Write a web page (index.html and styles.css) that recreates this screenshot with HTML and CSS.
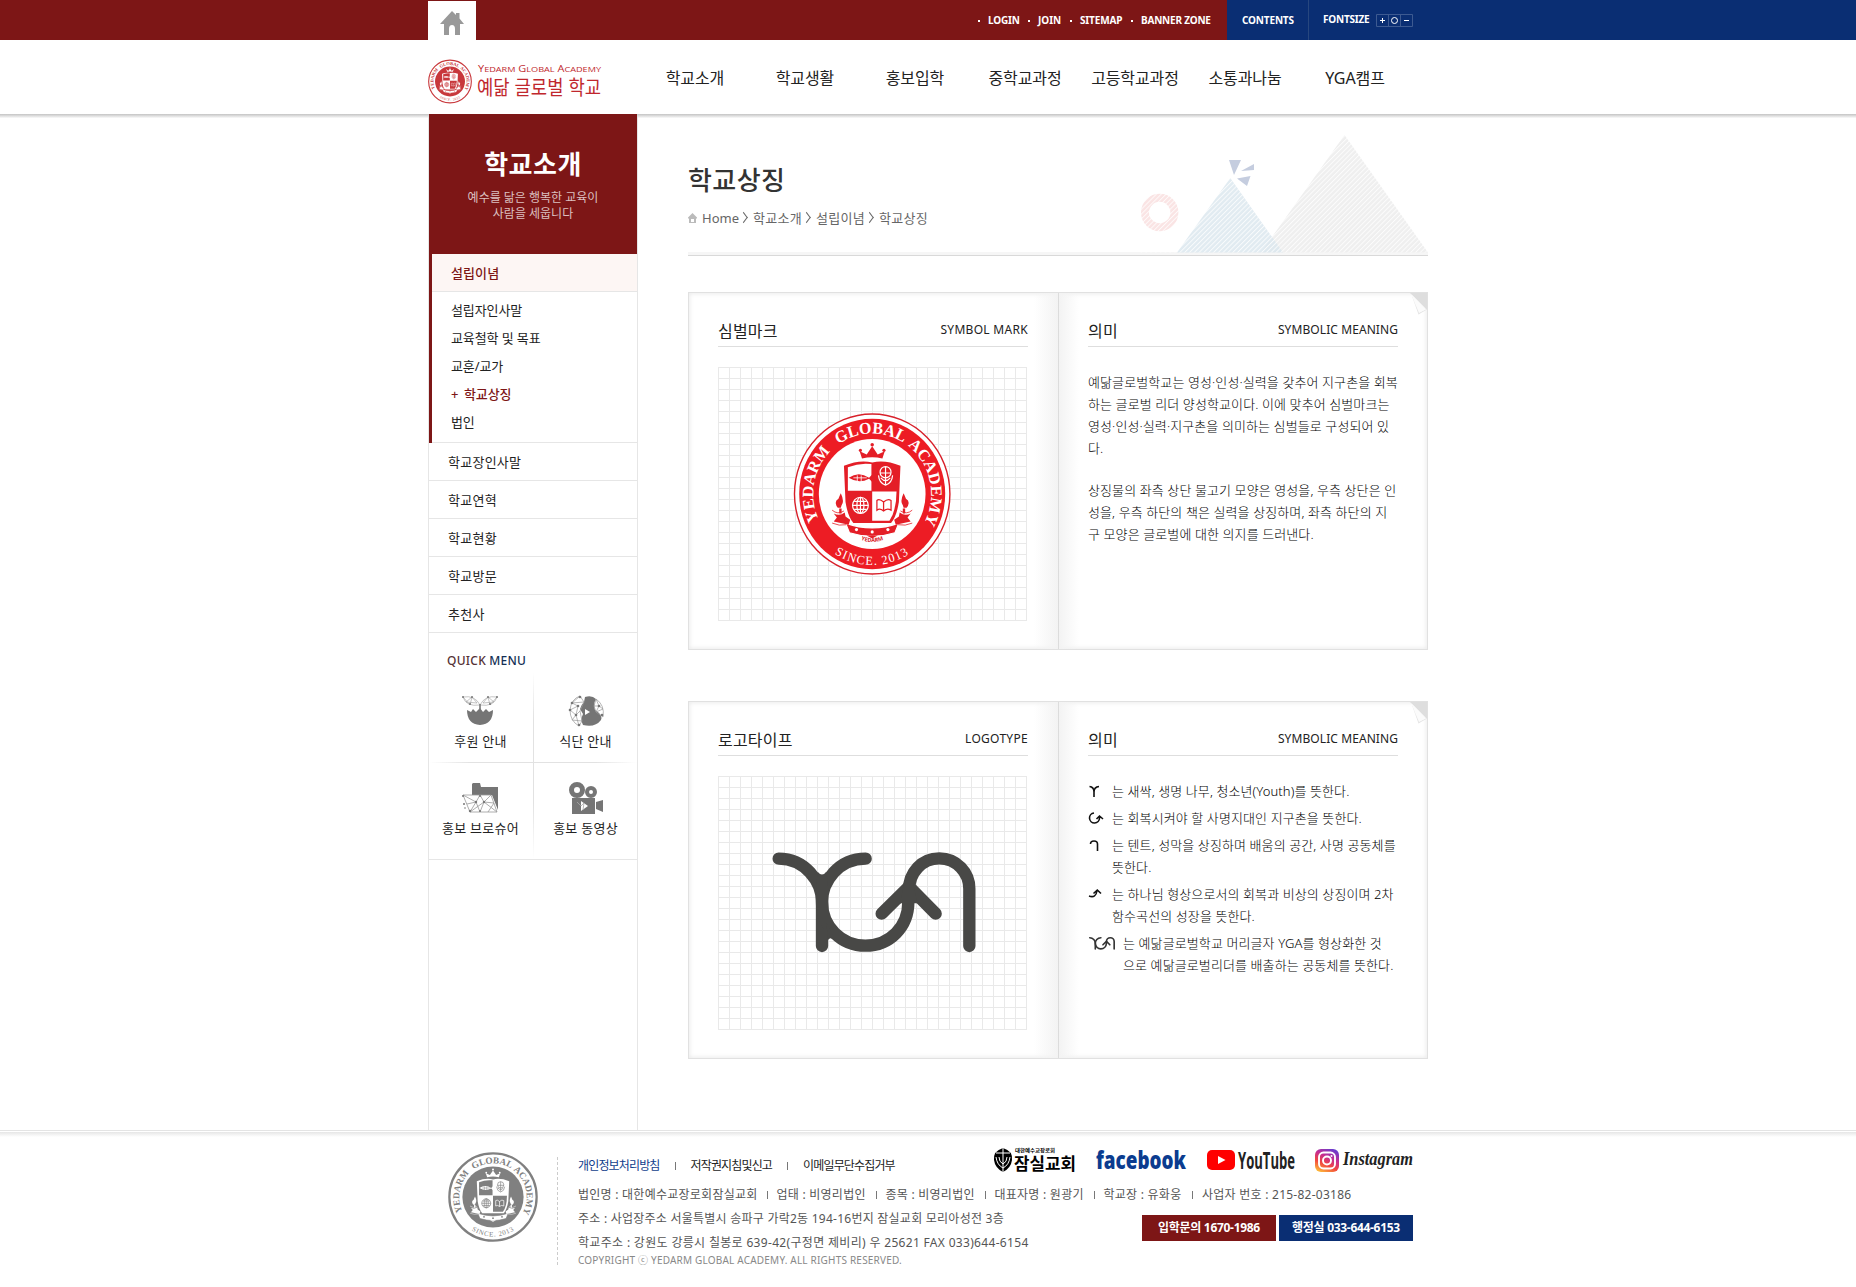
FILE: index.html
```html
<!DOCTYPE html>
<html lang="ko">
<head>
<meta charset="utf-8">
<title>학교상징 - 예닮글로벌학교</title>
<link rel="stylesheet" href="styles.css">
</head>
<body>
<svg class="defs" width="0" height="0" aria-hidden="true">
  <defs>
    <path id="arc-top" d="M-65 37.5 A75 75 0 1 1 65 37.5"/>
    <path id="arc-bottom" d="M-76.2 44 A88 88 0 0 0 76.2 44"/>
    <path id="arc-name" d="M-16 56 Q0 63 16 56"/>
    <g id="seal-text" class="seal-text">
      <g font-size="20.500" font-weight="700">
        <text><textPath href="#arc-top" startOffset="6">YEDARM</textPath></text>
        <text><textPath href="#arc-top" startOffset="111">GLOBAL</textPath></text>
        <text><textPath href="#arc-top" startOffset="205">ACADEMY</textPath></text>
      </g>
      <text font-size="15.5" letter-spacing="1.6" text-anchor="middle"><textPath href="#arc-bottom" startOffset="50%">SINCE. 2013</textPath></text>
    </g>
    <g id="seal-emblem">
      <path fill="var(--ink)" d="M-13 -44 L-16 -53 L-7 -49 L0 -59 L7 -49 L16 -53 L13 -44 Q0 -47 -13 -44Z"/>
      <g fill="var(--ink)"><circle cx="-15" cy="-54" r="2"/><circle cx="0" cy="-61" r="2.2"/><circle cx="15" cy="-54" r="2"/></g>
      <path fill="var(--ink)" d="M-36 -35 Q-16 -43 0 -39 Q16 -43 36 -35 L34 10 Q31 28 24 36 L-24 36 Q-31 28 -34 10Z"/>
      <path fill="var(--paper)" d="M-31 -33 Q-16 -39 -1 -37 L-1 -4 L-31 -4Z"/>
      <path fill="var(--paper)" d="M0 -3 L31 -3 Q31 20 22 33 L0 33Z"/>
      <path fill="var(--ink)" d="M-30 -20 Q-17 -29 -4 -20 L0 -24 L0 -15 L-4 -19 Q-17 -12 -30 -20Z"/>
      <path stroke="var(--paper)" fill="none" d="M-24 -20 H-7 M-19 -23 V-16 M-14 -23 V-16"/>
      <path fill="none" stroke="var(--paper)" stroke-width="1.5" d="M17 -34 V-12 M10 -26 H24 M17 -34 A7 7 0 0 1 24 -27 A7 7 0 0 1 10 -27 A7 7 0 0 1 17 -34 M8 -23 Q9 -13 17 -11 Q25 -13 26 -23 M11 -20 Q17 -13 23 -20"/>
      <g fill="none" stroke="var(--paper)" stroke-width="1.5"><circle cx="-15" cy="14" r="10"/><ellipse cx="-15" cy="14" rx="4.5" ry="10"/><path d="M-25 14 H-5 M-15 4 V24 M-23 9 H-7 M-23 19 H-7"/></g>
      <path fill="none" stroke="var(--ink)" stroke-width="1.6" d="M14.500 10 Q9 5 6 8 V20 Q10 17 14.500 21 Q19 17 24 20 V8 Q20 5 14.500 10 V21"/>
      <path fill="var(--ink)" stroke="var(--paper)" stroke-width="1.500" d="M-34 36 Q0 48 34 36 L29 48 Q0 57 -29 48Z"/>
      <g fill="var(--paper)"><circle cx="-20" cy="44" r="2"/><circle cx="0" cy="47" r="2"/><circle cx="20" cy="44" r="2"/></g>
      <g id="seal-torch"><path fill="var(--ink)" d="M-43 18 Q-50 10 -43 6 Q-42 3 -40 -1 Q-35 9 -39 14 L-40 17 H-44Z M-42 18 H-39 V24 H-42Z M-49 24 Q-42 28 -35 23 L-34 28 L-28 32 L-30 38 L-49 34 L-45 29Z"/><path fill="none" stroke="var(--ink)" d="M-51 20 Q-44 26 -36 21 M-51 36 Q-42 40 -33 38"/></g>
      <use href="#seal-torch" transform="scale(-1 1)"/>
      <path fill="var(--ink)" d="M-7 51.500 H7 L0 55Z"/>
    </g>
    <g id="seal-small">
      <circle r="97" fill="#fff" stroke="var(--ring)" stroke-width="5"/>
      <circle r="68" fill="var(--ring)"/>
      <use href="#seal-text"/>
      <use href="#seal-emblem"/>
    </g>
    <g id="yga-mark" fill="none" stroke="currentColor" stroke-linecap="round" stroke-linejoin="round">
      <path d="M296 506 C375 506 426 575 426 636 V768"/>
      <path d="M557 506 C475 506 426 575 426 636 C426 710 484 767 556 767 C630 767 685 710 685 636 L687 600 C687 548 725 505 778 505 C830 505 868 548 868 596 V768"/>
      <path d="M605 671 L687 590 L767 671"/>
    </g>
    <pattern id="hatch" width="3.400" height="3.400" patternUnits="userSpaceOnUse" patternTransform="rotate(45)"><path d="M0.500 0 V3.400" stroke="#fff" stroke-width=".9"/></pattern>
  </defs>
</svg>

<div class="topbar">
  <div class="wrap topbar-inner">
    <a class="home"><svg width="24" height="24" viewBox="0 0 24 24"><path fill="#999" d="M12 0 L16 4 V2 H19.500 V7.500 L24 13 H20 V24 H15 V18 Q15 14 12 14 Q9 14 9 18 V24 H4 V13 H0Z"/></svg></a>
    <ul class="util">
      <li class="u-login">LOGIN</li><li class="u-join">JOIN</li><li class="u-map">SITEMAP</li><li class="u-banner">BANNER ZONE</li>
    </ul>
    <a class="contents">CONTENTS</a>
    <div class="fontsize"><span>FONTSIZE</span>
      <svg width="37" height="13" viewBox="0 0 37 13" fill="none"><path stroke="#3d5a91" d="M.5 .5 H36.500 V12.500 H.5Z M12.500 0 V13 M24.500 0 V13"/><path stroke="#fff" d="M4 6.500 H9 M6.500 4 V9 M28 6.500 H33"/><circle cx="18.500" cy="6.500" r="3" stroke="#fff"/></svg>
    </div>
  </div>
</div>

<header class="header">
  <div class="wrap header-inner">
    <a class="logo">
      <svg width="174" height="44" viewBox="0 0 174 44">
        <g class="seal-red" transform="translate(22 21.500) scale(.22)"><use href="#seal-small"/></g>
        <g fill="#c0272d">
          <text class="latin" x="50" y="12" font-size="9" textLength="123" lengthAdjust="spacingAndGlyphs">Y<tspan font-size="7.500">EDARM</tspan> G<tspan font-size="7.500">LOBAL</tspan> A<tspan font-size="7.500">CADEMY</tspan></text>
          <text class="hangul" x="49" y="34.500" font-size="20" textLength="124" lengthAdjust="spacingAndGlyphs">예닮 글로벌 학교</text>
        </g>
      </svg>
    </a>
    <nav class="gnb"><a>학교소개</a><a>학교생활</a><a>홍보입학</a><a>중학교과정</a><a>고등학교과정</a><a>소통과나눔</a><a>YGA캠프</a></nav>
  </div>
</header>

<div class="wrap body">
  <aside class="side">
    <div class="side-title"><h2>학교소개</h2><p>예수를 닮은 행복한 교육이<br>사람을 세웁니다</p></div>
    <div class="side-open">
      <a class="side-on">설립이념</a>
      <ul><li>설립자인사말</li><li>교육철학 및 목표</li><li>교훈/교가</li><li class="cur"><i>+</i>학교상징</li><li>법인</li></ul>
    </div>
    <ul class="side-list"><li>학교장인사말</li><li>학교연혁</li><li>학교현황</li><li>학교방문</li><li>추천사</li></ul>
    <section class="quick">
      <h3><span>QUICK</span> <b>MENU</b></h3>
      <div class="quick-grid">
        <a class="q1"><svg width="36" height="32" viewBox="0 0 36 32"><path fill="#757575" d="M5 15 L9 17 L11 14 L14 17 L18 13 L21 17 L24 14 L27 17 L31 15 Q31 29 18 30 Q5 29 5 15Z"/><path fill="none" stroke="#aaa" stroke-width=".7" d="M18 15 V10 Q13 0 1 2 Q4 12 18 10 Q32 12 35 2 Q23 0 18 10 M1 2 L8 10 L10 2 L15 8 L4 7 L10 2 M35 2 L28 10 L26 2 L21 8 L32 7 L26 2"/><path stroke="#777" stroke-width="1.500" d="M18 15 V9"/><g fill="#777"><circle cx="1" cy="2" r="1"/><circle cx="10" cy="2" r="1"/><circle cx="8" cy="9" r="1"/><circle cx="35" cy="2" r="1"/><circle cx="26" cy="2" r="1"/><circle cx="28" cy="9" r="1"/></g></svg>후원 안내</a>
        <a class="q2"><svg width="36" height="32" viewBox="0 0 36 32"><path fill="#757575" d="M17 2 Q24 0 28 4 Q25 9 27 15 Q35 20 33 25 Q27 33 15 30 Q12 25 15 19 L12 14 Q13 10 16 7Z"/><path fill="#fff" d="M17 14 L22 17 L17 20Z"/><path fill="none" stroke="#999" stroke-width=".7" d="M12 1 Q3 4 2 15 Q2 26 11 31 L14 26 L12 16 L16 7 L12 1 L4 8 L10 11 L2 15 L8 20 L4 25 L14 26 M10 11 L8 20 L12 16 M4 8 L16 7 M8 20 L11 31 M28 4 L26 11 L28 17 L35 22 Q37 10 28 4 L31 11 L26 11 M31 11 L28 17 M31 11 L35 14 L28 17"/><g fill="#777"><circle cx="12" cy="2" r="1.300"/><circle cx="4" cy="8" r="1.300"/><circle cx="10" cy="11" r="1.300"/><circle cx="2" cy="15" r="1.300"/><circle cx="8" cy="20" r="1.300"/><circle cx="11" cy="30" r="1.300"/><circle cx="31" cy="11" r="1.300"/><circle cx="34" cy="20" r="1.300"/></g></svg>식단 안내</a>
        <a class="q3"><svg width="36" height="32" viewBox="0 0 36 32"><path fill="#757575" d="M10 2 L11 1 H18 L19 5 H36 V28 L30 13 H10Z"/><path fill="none" stroke="#999" stroke-width=".8" d="M1 13 H29 L35 30 H8 L1 13 L14 20 L18 13 L22 20 L29 13 M14 20 L8 30 L22 20 L18 30 L14 20 M22 20 L35 30 M5 22 L14 20 M22 20 L32 21 L26 30"/><g fill="#777"><circle cx="1" cy="14" r="1"/><circle cx="18" cy="14" r="1"/><circle cx="14" cy="20" r="1.200"/><circle cx="22" cy="20" r="1.200"/><circle cx="2" cy="22" r="1"/><circle cx="8" cy="29" r="1.200"/><circle cx="18" cy="29" r="1"/><circle cx="3" cy="26" r=".8"/></g></svg>홍보 브로슈어</a>
        <a class="q4"><svg width="36" height="34" viewBox="0 0 36 34"><circle cx="9" cy="9" r="5.500" fill="none" stroke="#757575" stroke-width="5"/><circle cx="23" cy="11" r="4" fill="none" stroke="#757575" stroke-width="4"/><path fill="#757575" d="M4 17 H27 V33 H4Z M28 21 L35 19 V31 L28 28Z"/><path fill="#fff" d="M13 20 L20 25 L13 30Z"/><path stroke="#aaa" stroke-width=".8" fill="none" d="M9 21 L13 25 L16 22 L15 29"/></svg>홍보 동영상</a>
      </div>
    </section>
  </aside>

  <main class="main">
    <div class="page-head">
      <svg class="deco" width="290" height="120" viewBox="0 0 290 120">
        <circle cx="21.700" cy="77.500" r="14.700" fill="none" stroke="#fae4e4" stroke-width="8"/>
        <path fill="#efefef" d="M206.500 0 L290 117.500 H123Z"/>
        <path fill="#d9e6ee" fill-opacity=".8" d="M92.300 43 L145 117.500 H39Z"/>
        <path fill="url(#hatch)" opacity=".85" d="M0 0 H290 V117.500 H0Z"/>
        <path fill="#c5cddf" d="M91 25 H103 L96 40Z M103 36 L116 29 V35Z M99 43.500 L112.500 41 L109 51Z"/>
      </svg>
      <h1>학교상징</h1>
      <p class="crumb"><svg width="9" height="11" viewBox="0 0 9 11"><path fill="#bbb" fill-rule="evenodd" d="M4.500 0 L9 4.500 V5.500 H8 V10 H1 V5.500 H0 V4.500Z M3 6 V9 H6 V6Z"/></svg><span>Home</span><i></i><span>학교소개</span><i></i><span>설립이념</span><i></i><span>학교상징</span></p>
    </div>

    <section class="book">
      <div class="page page-left">
        <div class="page-title"><h4>심벌마크</h4><em>SYMBOL MARK</em></div>
        <div class="grid">
          <svg class="seal-big" width="309" height="254" viewBox="0 0 309 254">
            <g transform="translate(154.200 127) scale(.785 .808)">
              <circle r="99" fill="#fff" stroke="#d8202a" stroke-width="1.800"/>
              <circle r="93" fill="#ed1c24"/>
              <circle r="68" fill="#fff"/>
              <use href="#seal-text"/>
              <use href="#seal-emblem"/>
              <text class="latin" font-weight="700" font-size="7" fill="#d8202a" text-anchor="middle"><textPath href="#arc-name" startOffset="50%">YEDARM</textPath></text>
            </g>
          </svg>
        </div>
      </div>
      <div class="page page-right">
        <div class="page-title"><h4>의미</h4><em class="tight">SYMBOLIC MEANING</em></div>
        <div class="prose">
          <p>예닮글로벌학교는 영성·인성·실력을 갖추어 지구촌을 회복<br>하는 글로벌 리더 양성학교이다. 이에 맞추어 심벌마크는<br>영성·인성·실력·지구촌을 의미하는 심벌들로 구성되어 있<br>다.</p>
          <p>상징물의 좌측 상단 물고기 모양은 영성을, 우측 상단은 인<br>성을, 우측 하단의 책은 실력을 상징하며, 좌측 하단의 지<br>구 모양은 글로벌에 대한 의지를 드러낸다.</p>
        </div>
      </div>
      <svg class="curl" width="17" height="22" viewBox="0 0 17 22"><path fill="#dedede" d="M0 0 H17 V17Z"/><path fill="#bbb" opacity=".4" d="M2 3 L8.500 21.500 L16 17Z"/><path fill="#fbfbfb" d="M1 1 L16 16.500 L9 20Z"/></svg>
    </section>

    <section class="book">
      <div class="page page-left">
        <div class="page-title"><h4>로고타이프</h4><em>LOGOTYPE</em></div>
        <div class="grid">
          <svg class="yga-big" width="309" height="254" viewBox="114 258 927 762"><use href="#yga-mark" stroke-width="37"/><path fill="currentColor" d="M413 545 Q426 562 439 545 L445 600 H408Z M440 700 L465 750 Q448 738 443 752Z M672 580 L700 580 L712 640 H660Z"/></svg>
        </div>
      </div>
      <div class="page page-right">
        <div class="page-title"><h4>의미</h4><em class="tight">SYMBOLIC MEANING</em></div>
        <ul class="marks">
          <li><svg width="24" height="22" viewBox="0 0 24 22"><path d="M1.500 6.500 Q6 7 6 12 V17 M11 6.500 Q6 7 6 12"/></svg><span>는 새싹, 생명 나무, 청소년(Youth)를 뜻한다.</span></li>
          <li><svg width="24" height="22" viewBox="0 0 24 22"><path d="M6 6 A5 5 0 1 0 11.500 11 V9 M8.500 12 L11.500 9 L15 12"/></svg><span>는 회복시켜야 할 사명지대인 지구촌을 뜻한다.</span></li>
          <li><svg width="24" height="22" viewBox="0 0 24 22"><path d="M2.500 10 Q2.500 7 6 7 Q9.500 7 9.500 10 V17"/></svg><span>는 텐트, 성막을 상징하며 배움의 공간, 사명 공동체를<br>뜻한다.</span></li>
          <li><svg width="24" height="22" viewBox="0 0 24 22"><path d="M1 13 Q8 15.500 9 7.500 M5.500 10.500 L9.300 7 L13 10.500"/></svg><span>는 하나님 형상으로서의 회복과 비상의 상징이며 2차<br>함수곡선의 성장을 뜻한다.</span></li>
          <li><svg class="yga-mini" width="35" height="22" viewBox="255 372 820 515"><use href="#yga-mark" stroke-width="38"/></svg><span>는 예닮글로벌학교 머리글자 YGA를 형상화한 것<br>으로 예닮글로벌리더를 배출하는 공동체를 뜻한다.</span></li>
        </ul>
      </div>
      <svg class="curl" width="17" height="22" viewBox="0 0 17 22"><path fill="#dedede" d="M0 0 H17 V17Z"/><path fill="#bbb" opacity=".4" d="M2 3 L8.500 21.500 L16 17Z"/><path fill="#fbfbfb" d="M1 1 L16 16.500 L9 20Z"/></svg>
    </section>
  </main>
</div>

<footer class="footer">
  <div class="wrap footer-inner">
    <svg class="seal-gray" width="90" height="90" viewBox="-100 -100 200 200"><use href="#seal-small"/></svg>
    <div class="foot-text">
      <div class="foot-top">
        <div class="foot-links"><a class="privacy">개인정보처리방침</a><a>저작권지침및신고</a><a>이메일무단수집거부</a></div>
        <div class="family">
          <svg class="f-church" width="82" height="26" viewBox="0 0 82 26"><path d="M9 1 Q19 4 18 13 Q17 21 9 25 Q1 21 0 13 Q-1 4 9 1Z"/><path fill="none" stroke="#fff" d="M9 0 V26 M2 6 H16 M2 10 Q3 18 9 21 Q15 18 16 10 M5 10 Q5 15 9 17 Q13 15 13 10"/><text class="hangul" x="21" y="5" font-size="5" font-weight="700" textLength="40" lengthAdjust="spacingAndGlyphs">대한예수교장로회</text><text class="hangul" x="20" y="22.500" font-size="16.500" font-weight="700" textLength="62" lengthAdjust="spacingAndGlyphs">잠실교회</text></svg>
          <svg class="f-facebook" width="90" height="26" viewBox="0 0 90 26"><text class="latin" x="0" y="22" font-weight="800" font-size="25" fill="#0b3c8f" textLength="90" lengthAdjust="spacingAndGlyphs">facebook</text></svg>
          <svg class="f-youtube" width="89" height="26" viewBox="0 0 89 26"><rect y="3" width="28" height="20" rx="5" fill="#f00"/><path fill="#fff" d="M11 9 L18.500 13 L11 17Z"/><text class="latin" x="31" y="22" font-weight="700" font-size="23" fill="#222" textLength="57" lengthAdjust="spacingAndGlyphs">YouTube</text></svg>
          <svg class="f-instagram" width="98" height="28" viewBox="0 0 98 28"><defs><linearGradient id="ig" x1=".2" y1="1" x2=".7" y2="0"><stop offset="0" stop-color="#fdbb3a"/><stop offset=".35" stop-color="#f2483e"/><stop offset=".65" stop-color="#c72d90"/><stop offset="1" stop-color="#6a3ccc"/></linearGradient></defs><rect y="2" width="24" height="23" rx="6" fill="url(#ig)"/><g fill="none" stroke="#fff" stroke-width="1.900"><rect x="4" y="5.500" width="16" height="16" rx="4.500"/><circle cx="12" cy="13.500" r="4"/></g><circle cx="16.500" cy="9" r="1" fill="#fff"/><text class="script" x="28" y="18" font-size="19" fill="#222" textLength="70" lengthAdjust="spacingAndGlyphs">Instagram</text></svg>
        </div>
      </div>
      <div class="foot-info"><span>법인명 : 대한예수교장로회잠실교회</span><span>업태 : 비영리법인</span><span>종목 : 비영리법인</span><span>대표자명 : 원광기</span><span>학교장 : 유화웅</span><span>사업자 번호 : 215-82-03186</span></div>
      <div class="foot-bottom">
        <div class="foot-addr">
          <p>주소 : 사업장주소 서울특별시 송파구 가락2동 194-16번지 잠실교회 모리아성전 3층</p>
          <p class="addr-school">학교주소 : 강원도 강릉시 칠봉로 639-42(구정면 제비리) 우 25621 FAX 033)644-6154</p>
          <small>COPYRIGHT ⓒ YEDARM GLOBAL ACADEMY. ALL RIGHTS RESERVED.</small>
        </div>
        <div class="tels"><b class="tel-red">입학문의 1670-1986</b><b class="tel-blue">행정실 033-644-6153</b></div>
      </div>
    </div>
  </div>
</footer>
</body>
</html>
```
FILE: styles.css
```css
* { box-sizing: border-box; margin: 0; padding: 0; }
body { font-family: "Noto Sans", "Noto Sans CJK KR", sans-serif; font-size: 13px; color: #333; background: #fff; white-space: nowrap; }
ul { list-style: none; }
i, em { font-style: normal; }
svg { display: block; overflow: visible; }
.hangul { font-family: "Noto Sans CJK KR", sans-serif; }
.latin { font-family: "Open Sans", sans-serif; }
.script { font-family: "Liberation Serif", serif; font-style: italic; font-weight: 700; }
.seal-text { font-family: "Liberation Serif", serif; fill: var(--text); }
.defs { position: absolute; }
.wrap { width: 1000px; margin: 0 auto; }

.topbar { height: 40px; background: linear-gradient(to right, #7d1616 calc(50% + 299px), #0a2e73 calc(50% + 299px)); }
.topbar-inner { display: flex; height: 40px; color: #fff; font-size: 10px; font-weight: 700; line-height: 40px; }
.home { width: 48px; height: 39px; margin-top: 1px; padding: 10px 0 0 12px; background: #fff; }
.util { display: flex; margin-left: 503px; }
.util li { display: flex; align-items: center; }
.util li::before { content: ""; width: 2px; height: 2px; margin: 2px 8px 0 -1px; background: #fff; }
.u-login { width: 50px; letter-spacing: -.15px; }
.u-join { width: 42px; }
.u-map { width: 61px; letter-spacing: -.15px; }
.u-banner { width: 95px; letter-spacing: -.2px; }
.contents { width: 82px; padding-left: 15px; border-right: 1px solid #27477f; letter-spacing: -.15px; }
.fontsize { display: flex; padding-left: 14px; line-height: 38px; letter-spacing: -.2px; }
.fontsize span { width: 53px; }
.fontsize svg { margin-top: 14px; }

.header { position: relative; height: 74px; }
.header::after { content: ""; position: absolute; left: 0; right: 0; top: 74px; height: 4px; background: linear-gradient(#c4c4c4, #d9d9d9 40%, rgba(240,240,240,.3)); }
.header-inner { display: flex; }
.logo { width: 212px; padding-top: 20px; }
.seal-red { --ring: #c8373b; --text: #c8373b; --ink: #fff; --paper: #c8373b; }
.gnb { display: flex; padding-top: 20px; }
.gnb a { width: 110px; text-align: center; font-size: 16px; line-height: 37px; letter-spacing: -.1px; color: #222; }

.body { display: flex; height: 1016px; }
.side { width: 210px; border: solid #e6e6e6; border-width: 0 1px; }
.side-title { position: relative; height: 140px; padding-top: 30px; background: #7d1616; color: #fff; text-align: center; }
.side-title h2 { font-size: 26px; line-height: 40px; font-weight: 700; letter-spacing: .5px; }
.side-title p { margin-top: 6px; font-size: 12px; line-height: 16px; color: #dcc0c0; }
.side-open { border-left: 3px solid #7d1616; }
.side-on { display: block; height: 38px; padding-left: 19px; line-height: 39px; background: #fdf6f4; border-bottom: 1px solid #e6e6e6; color: #7d1616; font-weight: 500; letter-spacing: .1px; }
.side-open ul { height: 151px; padding: 4px 0 0 19px; border-bottom: 1px solid #e6e6e6; }
.side-open li { height: 28px; line-height: 29px; color: #222; letter-spacing: -.1px; }
.side-open .cur { color: #7d1616; font-weight: 500; }
.cur i { display: inline-block; width: 13px; }
.side-list li { height: 38px; padding-left: 19px; line-height: 39px; border-bottom: 1px solid #e6e6e6; color: #222; letter-spacing: .25px; }
.quick { height: 227px; padding-top: 17px; border-bottom: 1px solid #e6e6e6; }
.quick h3 { padding-left: 18px; font-size: 12px; line-height: 22px; letter-spacing: .25px; font-weight: 500; color: #143055; }
.quick h3 span { color: #543134; }
.quick h3 b { font-weight: 500; }
.quick-grid { display: grid; grid-template-columns: 105px 103px; grid-template-rows: 90px 97px; height: 187px; background: linear-gradient(rgba(226,226,226,0), #e2e2e2 25%, #e2e2e2 70%, rgba(226,226,226,0)) 104px 0 / 1px 100% no-repeat, linear-gradient(to right, rgba(226,226,226,0), #e2e2e2 20%, #e2e2e2 80%, rgba(226,226,226,0)) 0 90px / 100% 1px no-repeat; }
.quick-grid a { display: flex; flex-direction: column; align-items: center; color: #222; line-height: 22px; letter-spacing: .25px; }
.q1 svg, .q2 svg { margin: 23px 0 3px; }
.q3 svg { margin: 20px 0 3px; }
.q4 svg { margin: 19px 0 2px; }
.quick-grid .q1, .quick-grid .q3 { padding-right: 2px; }
.q1 svg, .q3 svg { margin-left: -2px; }

.main { width: 740px; margin-left: 50px; }
.page-head { position: relative; height: 142px; padding-top: 45px; border-bottom: 1px solid #d9d9d9; box-shadow: inset 0 -3px 0 #f6f6f6; }
.deco { position: absolute; right: 0; top: 21px; width: 290px; }
.page-head h1 { font-size: 26px; line-height: 42px; font-weight: 500; letter-spacing: .4px; }
.crumb { display: flex; align-items: center; margin-top: 6px; line-height: 22px; color: #666; }
.crumb span + i + span { letter-spacing: .3px; }
.crumb svg { margin-right: 5px; }
.crumb i { width: 7px; height: 7px; margin: 0 6px 2px 1px; border: solid #666; border-width: 1px 1px 0 0; transform: rotate(45deg) skew(8deg, 8deg); }

.book { position: relative; display: flex; height: 358px; margin-top: 36px; border: 1px solid #e1e1e1; box-shadow: inset 0 0 4px 1px #ececec; }
.book + .book { margin-top: 51px; }
.curl { position: absolute; right: 0; top: 0; }
.page { padding: 25px 29px 0; }
.page-left { width: 370px; border-right: 1px solid #dcdcdc; background: linear-gradient(to right, rgba(244,244,244,0) 345px, #f3f3f3); }
.page-right { flex: 1; background: linear-gradient(to right, #f3f3f3, rgba(244,244,244,0) 20px); }
.page-title { display: flex; justify-content: space-between; width: 310px; height: 29px; border-bottom: 1px solid #dedede; }
.page-title h4 { font-size: 16px; font-weight: 400; line-height: 26px; color: #222; letter-spacing: .2px; }
.page-title em { font-size: 12px; line-height: 23px; letter-spacing: .3px; color: #222; }
.page-title .tight { letter-spacing: .08px; }
.grid { width: 309px; height: 254px; margin-top: 20px; background: repeating-linear-gradient(to right, #e9e9e9 0 1px, transparent 1px 11px), repeating-linear-gradient(#e9e9e9 0 1px, transparent 1px 11px); }
.seal-big { --text: #fff; --ink: #e41e27; --paper: #fff; }
.yga-big { color: #484846; }
.prose, .marks { padding-top: 24px; line-height: 22px; font-weight: 300; letter-spacing: .1px; color: #000; }
.prose p + p { margin-top: 20px; }
.marks li { display: flex; margin-bottom: 5px; }
.marks path { fill: none; stroke: #111; stroke-width: 1.6; }
.marks .yga-mini { color: #333; }

.footer { position: relative; height: 157px; border-top: 1px solid #e4e4e4; }
.footer::before { content: ""; display: block; height: 5px; margin-top: 1px; background: linear-gradient(#e6e6e6, #fff); }
.footer-inner { display: flex; padding: 15px 15px 0 20px; }
.seal-gray { --ring: #808080; --text: #808080; --ink: #fff; --paper: #808080; margin-right: 19px; }
.foot-text { width: 856px; height: 108px; margin-top: 5px; padding-left: 20px; border-left: 1px dashed #ccc; font-size: 12px; color: #555; }
.foot-top { display: flex; justify-content: space-between; height: 26px; }
.foot-links { display: flex; line-height: 17px; letter-spacing: -.85px; color: #222; }
.foot-links a + a::before, .foot-info span + span::before { content: ""; display: inline-block; width: 1px; height: 8px; margin: 0 15px 0 15px; background: #777; }
.foot-links .privacy { color: #12408c; }
.family { display: flex; margin-top: -10px; }
.f-facebook { margin-left: 20px; }
.f-youtube { margin-left: 21px; }
.f-instagram { margin-left: 19px; }
.foot-info { display: grid; grid-template-columns: 188.500px 109px 109px 109px 98.500px auto; line-height: 24px; letter-spacing: .25px; }
.foot-info span + span::before { margin: 0 9px 0 0; }
.foot-bottom { display: flex; justify-content: space-between; }
.foot-addr { width: 460px; }
.foot-addr p { line-height: 24px; letter-spacing: .24px; }
.foot-addr .addr-school { letter-spacing: .32px; }
.foot-addr small { display: block; font-size: 10px; line-height: 10px; letter-spacing: .2px; color: #888; }
.tels { display: flex; gap: 3px; margin-top: 8px; }
.tels b { width: 134px; height: 26px; line-height: 25px; text-align: center; color: #fff; font-weight: 700; letter-spacing: -.3px; }
.tel-red { background: #7d1616; }
.tel-blue { background: #0a2e73; }
```
